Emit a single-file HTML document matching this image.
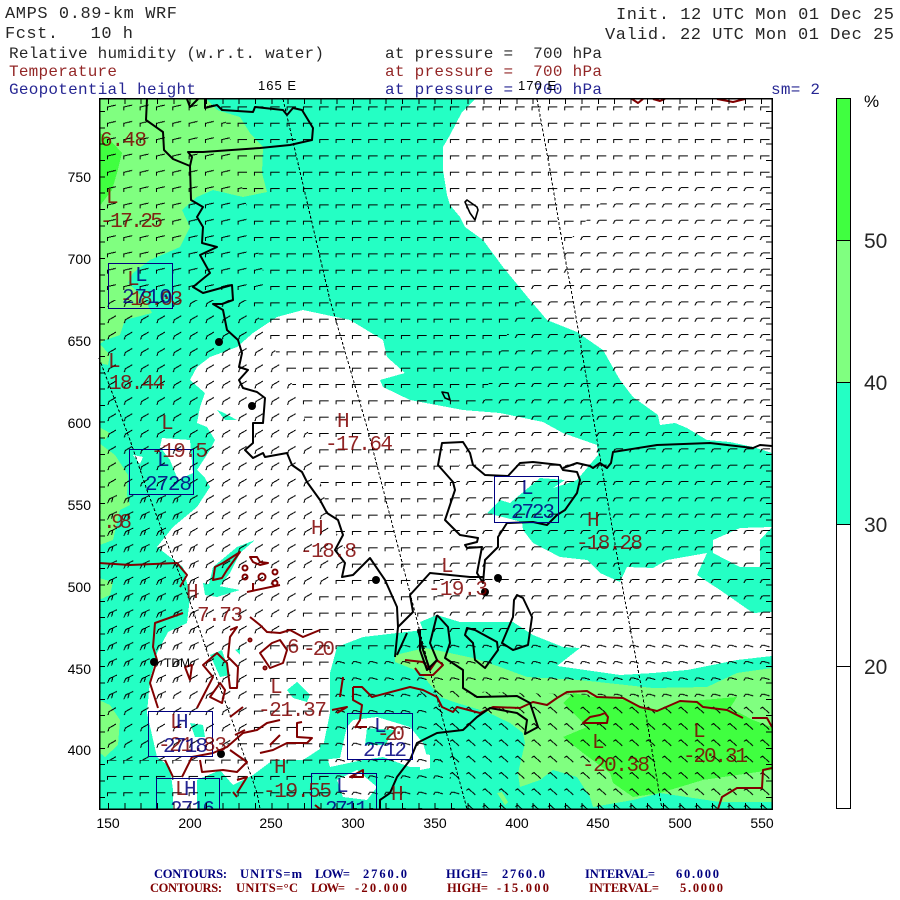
<!DOCTYPE html>
<html><head><meta charset="utf-8"><title>AMPS 0.89-km WRF</title>
<style>
html,body{margin:0;padding:0;background:#fff}
svg{display:block}
text{white-space:pre}
.m{font-family:"Liberation Mono",monospace;opacity:.85}
.s{font-family:"Liberation Sans",sans-serif}
.f{font-family:"Liberation Serif",serif;font-size:12.5px;font-weight:bold}
.k{fill:#000}.r{fill:#800000}.b{fill:#000080}
.h{font-size:17px}.h2{font-size:16px}
.n{font-family:"Liberation Mono",monospace;font-size:21px;opacity:.85}
.u{font-family:"Liberation Sans",sans-serif;font-size:14px;fill:#000}
.c{font-family:"Liberation Sans",sans-serif;font-size:21px;fill:#000;opacity:.85}
.bb{fill:none;stroke:#000;stroke-width:1;shape-rendering:crispEdges}
</style></head><body>
<svg xmlns="http://www.w3.org/2000/svg" width="900" height="900" viewBox="0 0 900 900">
<defs>
<clipPath id="mp"><rect x="99" y="98" width="673" height="711"/></clipPath>
<pattern id="a" patternUnits="userSpaceOnUse" x="105" y="98" width="16.33" height="16.33"><path class="bb" d="M2.5 12.5V8.7H11.5"/></pattern>
<pattern id="w" patternUnits="userSpaceOnUse" x="105" y="98" width="16.33" height="16.33"><path class="bb" d="M2 11.5L3.5 8.5L5 8H12"/></pattern>
<pattern id="c" patternUnits="userSpaceOnUse" x="105" y="98" width="16.33" height="16.33"><path class="bb" d="M2.5 12.5V9L11 7"/></pattern>
<pattern id="g" patternUnits="userSpaceOnUse" x="105" y="98" width="16.33" height="16.33"><path class="bb" d="M3 13L4 9.5L11 5.5"/></pattern>
<pattern id="d" patternUnits="userSpaceOnUse" x="105" y="98" width="16.33" height="16.33"><path class="bb" d="M2.5 13.5L4.5 9L12 5.5M6.5 12.5L8 7.5"/></pattern>
<pattern id="e" patternUnits="userSpaceOnUse" x="105" y="98" width="16.33" height="16.33"><path class="bb" d="M2 6.5L4.5 5L11 11"/></pattern>
<pattern id="t" patternUnits="userSpaceOnUse" x="105" y="98" width="16.33" height="16.33"><path class="bb" d="M2 11L3.5 8.5H6L11.5 10"/></pattern>
</defs>

<!-- humidity fill -->
<g shape-rendering="crispEdges">
<rect x="99" y="98" width="673" height="711" fill="#24FFC4"/>
<g fill="#fff">
<polygon points="476,98 772,98 772,453 753,447 730,442 707,440 687,428 675,423 660,425 658,415 633,397 620,380 603,350 577,332 547,320 530,300 503,267 483,240 465,227 460,217 450,205 447,195 443,170 443,147 450,135 462,112"/>
<polygon points="303,310 350,320 383,340 387,357 405,373 380,380 383,387 410,400 463,410 500,413 543,422 563,433 597,445 598,455 577,480 553,488 565,480 540,478 510,503 500,500 487,513 522,522 523,530 533,543 560,557 587,560 600,573 620,582 627,567 653,568 667,560 707,553 697,575 720,590 753,613 772,612 772,656 737,660 687,670 653,673 620,675 557,666 580,648 563,647 533,635 513,622 460,622 437,615 420,622 423,630 363,637 337,647 330,673 330,713 323,747 303,760 273,760 253,775 233,785 220,770 197,780 197,809 173,809 173,790 170,767 157,757 147,713 150,680 157,653 168,632 187,623 190,597 188,587 183,567 157,547 173,527 197,507 210,487 205,478 197,470 210,450 215,440 207,427 197,423 200,407 205,393 190,380 197,367 210,357 237,347 253,333 277,317"/>
<polygon points="713,540 740,528 772,527 760,540 760,567 740,567 713,553"/>
<polygon points="162,438 190,440 193,473 178,480 170,460 160,447"/>
<polygon points="133,455 143,457 140,464"/>
<polygon points="353,720 377,717 410,727 423,743 430,767 410,767 383,757 363,760 330,767 327,757 343,743 347,727"/>
<polygon points="337,780 357,770 377,787 367,800 343,797"/>
<polygon points="420,753 430,755 430,768 420,770"/>
</g>
<g fill="#24FFC4">
<polygon points="207,593 213,567 237,547 255,540 240,553 230,573 217,590"/>
<polygon points="203,583 240,590 217,597 205,595"/>
<polygon points="217,410 222,412 237,420 225,420"/>
<polygon points="287,690 297,682 310,695 307,702 293,698"/>
<polygon points="210,655 222,650 230,675 220,677"/>
<polygon points="190,723 203,725 205,737 195,737"/>
<polygon points="235,650 240,648 240,655"/>
<polygon points="367,728 395,730 385,745 365,745"/>
<polygon points="320,745 345,735 340,758 320,760"/>
</g>
<g fill="#80FF80">
<polygon points="99,98 205,98 217,110 240,117 250,133 263,147 262,173 267,192 243,197 213,190 197,197 182,210 190,227 180,247 150,260 133,273 128,283 145,300 152,313 125,320 120,335 105,340 99,345"/>
<polygon points="99,343 110,355 108,365 99,363"/>
<polygon points="99,427 110,433 105,440 99,436"/>
<polygon points="99,443 115,455 128,475 127,495 130,505 120,510 113,540 100,545 99,507"/>
<polygon points="99,578 113,582 110,595 99,600"/>
<polygon points="99,700 110,705 120,720 118,745 105,757 99,752"/>
<polygon points="395,655 425,648 445,652 473,658 500,667 527,677 580,680 653,688 707,687 737,673 772,668 772,802 720,802 660,793 633,800 593,807 590,797 577,777 553,770 540,780 520,787 518,773 525,743 523,733 510,723 487,712 457,703 440,697 420,672 395,662"/>
<polygon points="497,793 502,792 508,802 505,805"/>
</g>
<polygon fill="#40FF40" points="563,703 573,693 593,697 627,700 653,712 680,702 737,697 730,708 753,720 772,727 772,770 737,775 703,780 660,793 633,797 613,783 610,773 583,753 563,737 587,727"/>
<polygon fill="#40FF40" points="99,132 113,143 122,153 117,173 112,190 99,207"/>
</g>

<!-- wind barbs -->
<g>
<polygon fill="url(#a)" points="220,98 772,98 772,180 620,180 520,300 460,460 430,640 335,660 335,809 99,809 99,760 200,760 250,730 250,660 290,620 350,560 330,520 300,400 250,300 270,300"/>
<polygon fill="url(#w)" points="772,180 772,640 430,640 460,460 520,300 620,180"/>
<polygon fill="url(#c)" points="99,98 220,98 270,300 99,300"/>
<polygon fill="url(#g)" points="99,300 250,300 300,400 330,520 350,560 290,620 250,660 250,730 200,760 99,760 99,700 170,700 200,660 200,560 175,490 99,490"/>
<polygon fill="url(#d)" points="99,490 175,490 200,560 200,660 170,700 99,700"/>
<polygon fill="url(#t)" points="430,640 772,640 772,700 420,690 440,760 470,809 335,809 335,660"/>
<polygon fill="url(#e)" points="420,690 772,700 772,809 470,809 440,760"/>
</g>

<!-- longitude dashed -->
<g fill="none" stroke="#000" stroke-width="1" stroke-dasharray="3 2" shape-rendering="crispEdges">
<path d="M283 99L330 300L367 427L410 593L433 683L467 809"/>
<path d="M537 99L550 170L563 247L573 300L600 457L623 590L640 680L662 809"/>
<path d="M99 358L130 440L148 493L167 543L187 593L210 660L233 723L257 793L260 809"/>
</g>

<!-- temperature contours -->
<g clip-path="url(#mp)" fill="none" stroke="#800000" stroke-width="2" stroke-linejoin="round">
<path d="M99 563L130 565L177 563L187 575L180 587"/>
<path d="M183 613L155 623L153 647L157 660L150 683L158 708"/>
<path d="M165 760L173 777"/>
<path d="M353 687L362 687L372 697L410 687L423 690L437 697L442 707L453 712L457 707L480 713L493 707L520 708L533 702L547 705L557 698L567 692L587 691L597 697L623 698L640 707L657 711L680 701L697 702L703 707L727 710L743 718"/>
<path d="M752 718L767 718L772 727"/>
<path d="M772 768L763 770L762 788L737 788L722 797L718 809"/>
<path d="M583 723L590 717L600 715L605 713L608 717L607 723Z"/>
<path d="M632 99L638 103L643 99M653 99L660 101L665 99M717 99L733 102L745 99"/>
<path d="M405 660L423 662L430 670L437 660L443 665L433 675L420 675L415 668"/>
<path d="M230 630L237 627L230 637L228 657L238 667L237 688L230 688L227 663L217 653L203 665L213 677L197 708"/>
<path d="M250 617L260 625L267 632L280 633L290 630L303 637L320 630"/>
<path d="M260 653L272 643L280 640L287 650L283 663L270 668Z"/>
<path d="M185 667L192 665L190 680Z"/>
<path d="M210 697L220 683L225 690L222 703Z"/>
<path d="M230 717L243 707"/>
<path d="M182 777L192 757L213 753L227 747L243 733L257 730L267 723L280 720"/>
<path d="M200 760L202 772L223 770L237 772L247 762L237 755L230 750"/>
<path d="M260 753L273 750L287 743L307 743L312 738L297 737L297 723L302 722"/>
<path d="M332 710L347 707L337 713M343 677L340 697"/>
<path d="M353 687L353 700L362 705L360 720L355 728"/>
<path d="M350 777L363 770L363 777Z"/>
<path d="M357 727L367 727M237 780L247 777L237 793"/>
<path d="M213 580L215 567L223 563L240 552L227 570L222 578Z"/>
<path d="M250 557L257 557L260 562L268 563L260 565L253 562Z"/>
<path d="M247 592L280 585M253 583L253 590"/>
<circle cx="245" cy="568" r="2.5"/><circle cx="245" cy="577" r="2.5"/><circle cx="262" cy="577" r="3.5"/><circle cx="275" cy="572" r="2.5"/><circle cx="275" cy="583" r="2.5"/>
<circle cx="250" cy="640" r="1.5"/><circle cx="265" cy="668" r="1.5"/>
<path d="M235 735L245 730M270 745L280 735M315 805L320 809M233 792L237 797"/>
</g>

<!-- coast -->
<g clip-path="url(#mp)" fill="none" stroke="#000" stroke-width="2" stroke-linejoin="round">
<path d="M147 99L146 120L163 132L164 150L173 159L190 166L191 200L203 207L197 217L203 227L202 243L217 247L200 255L210 273L193 287L203 293L232 285L233 300L222 304L213 304L223 310L227 330L238 340L242 353L239 367L248 370L239 380L243 388L257 392L265 398L263 423L253 423L253 443L245 450L253 458L263 453L265 457L287 453L292 465L302 472L307 482L320 500L327 513L338 520L343 535L335 550L345 563L342 577L353 575L370 558L385 580L397 607L398 627L395 657"/>
<path d="M205 99L205 108L217 105L222 110L253 112L255 107L283 110L287 115L293 108L302 110L313 128L312 140L290 145L260 148L203 152L188 152L192 157L190 166"/>
<path d="M187 99L190 107L198 99"/>
<path d="M437 615L448 627L450 643L445 658L463 670L463 688L477 697L517 696L530 703L538 727L525 734L527 720L517 713L490 708L477 717L463 730L437 733L417 743L410 760L397 777L390 793L380 800L380 809"/>
<path d="M437 615L430 643L437 660L427 670L420 650L420 630"/>
<path d="M467 628L475 630L497 642L498 650L485 668L475 660L473 643L465 635Z"/>
<path d="M517 595L523 598L532 617L528 645L513 650L502 643L513 617L514 600Z"/>
<path d="M483 583L477 573L482 547L467 548L465 545L477 542L478 538L460 535L445 520L455 490L453 482L438 465L442 443L463 442L470 453L473 465L485 475L508 476L520 463L533 462L560 465L563 470L577 472L580 480L577 493L565 510L557 515L547 525L533 522L507 523L498 537L498 547L485 560Z"/>
<path d="M483 577L470 577L430 573L410 595L413 612L398 627M418 630L423 650L430 670M407 633L397 655"/>
<path d="M563 468L577 463L590 466L593 468L600 463L607 468L611 463L613 452L657 445L710 443L753 448L760 445L772 446"/>
<path d="M467 200L477 207L478 210L475 220L470 213L465 202Z" stroke-width="1.6"/>
<path d="M442 392L448 393L450 400L445 398Z" stroke-width="1.6"/>
</g>
<g fill="#000">
<circle cx="219" cy="342" r="4"/><circle cx="252" cy="406" r="4"/><circle cx="376" cy="580" r="4"/><circle cx="498" cy="578" r="4"/><circle cx="485" cy="592" r="4"/><circle cx="154" cy="662" r="4"/><circle cx="221" cy="754" r="4"/>
</g>
<text x="164" y="667" class="s" font-size="12" fill="#000">TDM</text>

<!-- blue boxes -->
<g fill="none" stroke="#000080" shape-rendering="crispEdges" clip-path="url(#mp)">
<rect x="108.5" y="263.5" width="64" height="45"/>
<rect x="129.5" y="449.5" width="64" height="45"/>
<rect x="494.5" y="476.5" width="64" height="46"/>
<rect x="148.5" y="711.5" width="64" height="45"/>
<rect x="156.5" y="778.5" width="63" height="40"/>
<rect x="311.5" y="773.5" width="65" height="50"/>
<rect x="347.5" y="713.5" width="65" height="46"/>
</g>

<!-- field labels -->
<g clip-path="url(#mp)">
<g class="n r">
<text x="100" y="146" textLength="47">6.48</text>
<text x="106" y="203">L</text>
<text x="100" y="227" textLength="63">-17.25</text>
<text x="127" y="285">L</text>
<text x="120" y="305" textLength="63">-18.03</text>
<text x="108" y="367">L</text>
<text x="109" y="389" textLength="56">18.44</text>
<text x="161" y="429">L</text>
<text x="151" y="457" textLength="57">-19.5</text>
<text x="337" y="427">H</text>
<text x="325" y="450" textLength="68">-17.64</text>
<text x="103" y="528" textLength="29">.98</text>
<text x="311" y="534">H</text>
<text x="300" y="557" textLength="57">-18.8</text>
<text x="186" y="598">H</text>
<text x="197" y="621" textLength="46">7.73</text>
<text x="441" y="572">L</text>
<text x="428" y="595" textLength="60">-19.3</text>
<text x="587" y="526">H</text>
<text x="576" y="549" textLength="67">-18.28</text>
<text x="287" y="653">6</text>
<text x="303" y="655" textLength="32">-20</text>
<text x="270" y="693">L</text>
<text x="258" y="716" textLength="69">-21.37</text>
<text x="170" y="728">L</text>
<text x="158" y="751" textLength="69">-21.83</text>
<text x="274" y="773">H</text>
<text x="263" y="797" textLength="69">-19.55</text>
<text x="175" y="795">L</text>
<text x="391" y="800">H</text>
<text x="377" y="740" textLength="28">-20</text>
<text x="592" y="748">L</text>
<text x="582" y="771" textLength="68">-20.38</text>
<text x="693" y="737">L</text>
<text x="683" y="762" textLength="65">-20.31</text>
</g>
<g class="n b">
<text x="135" y="281">L</text>
<text x="122" y="303" textLength="50">2710</text>
<text x="157" y="466">L</text>
<text x="145" y="490" textLength="47">2728</text>
<text x="521" y="494">L</text>
<text x="511" y="518" textLength="44">2723</text>
<text x="176" y="728">H</text>
<text x="163" y="752" textLength="45">2718</text>
<text x="184" y="795">H</text>
<text x="170" y="815" textLength="45">2716</text>
<text x="336" y="792">L</text>
<text x="325" y="815" textLength="43">2711</text>
<text x="374" y="732">L</text>
<text x="363" y="756" textLength="44">2712</text>
</g>
</g>

<!-- frame -->
<g fill="none" stroke="#000" shape-rendering="crispEdges">
<line x1="102" y1="98" x2="102" y2="809" stroke-width="6" stroke-dasharray="1 15.33" stroke-dashoffset="-13"/>
<line x1="769" y1="98" x2="769" y2="809" stroke-width="6" stroke-dasharray="1 15.33" stroke-dashoffset="-13"/>
<line x1="99" y1="101" x2="772" y2="101" stroke-width="6" stroke-dasharray="1 15.33" stroke-dashoffset="-9"/>
<line x1="99" y1="806" x2="772" y2="806" stroke-width="6" stroke-dasharray="1 15.33" stroke-dashoffset="-9"/>
<rect x="99.5" y="98.5" width="672.5" height="710.5" stroke-width="1.5"/>
</g>

<!-- header -->
<g class="m k">
<text x="5" y="18" class="h" textLength="172">AMPS 0.89-km WRF</text>
<text x="5" y="38" class="h" textLength="128">Fcst.   10 h</text>
<text x="616" y="19" class="h" textLength="278">Init. 12 UTC Mon 01 Dec 25</text>
<text x="605" y="39" class="h" textLength="289">Valid. 22 UTC Mon 01 Dec 25</text>
<text x="9" y="58" class="h2" textLength="315">Relative humidity (w.r.t. water)</text>
<text x="385" y="58" class="h2" textLength="217">at pressure =  700 hPa</text>
</g>
<g class="m r">
<text x="9" y="76" class="h2" textLength="108">Temperature</text>
<text x="385" y="76" class="h2" textLength="217">at pressure =  700 hPa</text>
</g>
<g class="m b">
<text x="9" y="94" class="h2" textLength="187">Geopotential height</text>
<text x="385" y="94" class="h2" textLength="217">at pressure =  700 hPa</text>
<text x="771" y="94" class="h2" textLength="49">sm= 2</text>
</g>
<text x="258" y="90" class="s" font-size="13" fill="#000" textLength="38">165 E</text>
<text x="518" y="90" class="s" font-size="13" fill="#000" textLength="38">170 E</text>

<!-- y axis -->
<g class="u" text-anchor="end">
<text x="91" y="182">750</text><text x="91" y="264">700</text><text x="91" y="346">650</text><text x="91" y="428">600</text><text x="91" y="510">550</text><text x="91" y="592">500</text><text x="91" y="674">450</text><text x="91" y="755">400</text>
</g>
<!-- x axis -->
<g class="u" text-anchor="middle">
<text x="108" y="828">150</text><text x="190" y="828">200</text><text x="271" y="828">250</text><text x="353" y="828">300</text><text x="435" y="828">350</text><text x="517" y="828">400</text><text x="598" y="828">450</text><text x="680" y="828">500</text><text x="762" y="828">550</text>
</g>

<!-- colour bar -->
<g shape-rendering="crispEdges" stroke="#000">
<rect x="836.5" y="98.5" width="14" height="142" fill="#40FF40"/>
<rect x="836.5" y="240.5" width="14" height="142" fill="#80FF80"/>
<rect x="836.5" y="382.5" width="14" height="142" fill="#24FFC4"/>
<rect x="836.5" y="524.5" width="14" height="142" fill="#fff"/>
<rect x="836.5" y="666.5" width="14" height="142" fill="#fff"/>
</g>
<text x="864" y="107" class="s" font-size="17" fill="#000">%</text>
<g class="c">
<text x="864" y="248">50</text><text x="864" y="390">40</text><text x="864" y="532">30</text><text x="864" y="674">20</text>
</g>

<!-- footer -->
<g class="f b">
<text x="154" y="878" textLength="73">CONTOURS:</text>
<text x="240" y="878" textLength="62">UNITS=m</text>
<text x="315" y="878" textLength="35">LOW=</text>
<text x="363" y="878" textLength="44">2760.0</text>
<text x="446" y="878" textLength="42">HIGH=</text>
<text x="502" y="878" textLength="43">2760.0</text>
<text x="585" y="878" textLength="70">INTERVAL=</text>
<text x="676" y="878" textLength="43">60.000</text>
</g>
<g class="f r">
<text x="150" y="892" textLength="72">CONTOURS:</text>
<text x="236" y="892" textLength="62">UNITS=°C</text>
<text x="311" y="892" textLength="34">LOW=</text>
<text x="355" y="892" textLength="52">-20.000</text>
<text x="447" y="892" textLength="41">HIGH=</text>
<text x="497" y="892" textLength="52">-15.000</text>
<text x="589" y="892" textLength="70">INTERVAL=</text>
<text x="680" y="892" textLength="43">5.0000</text>
</g>
</svg>
</body></html>
